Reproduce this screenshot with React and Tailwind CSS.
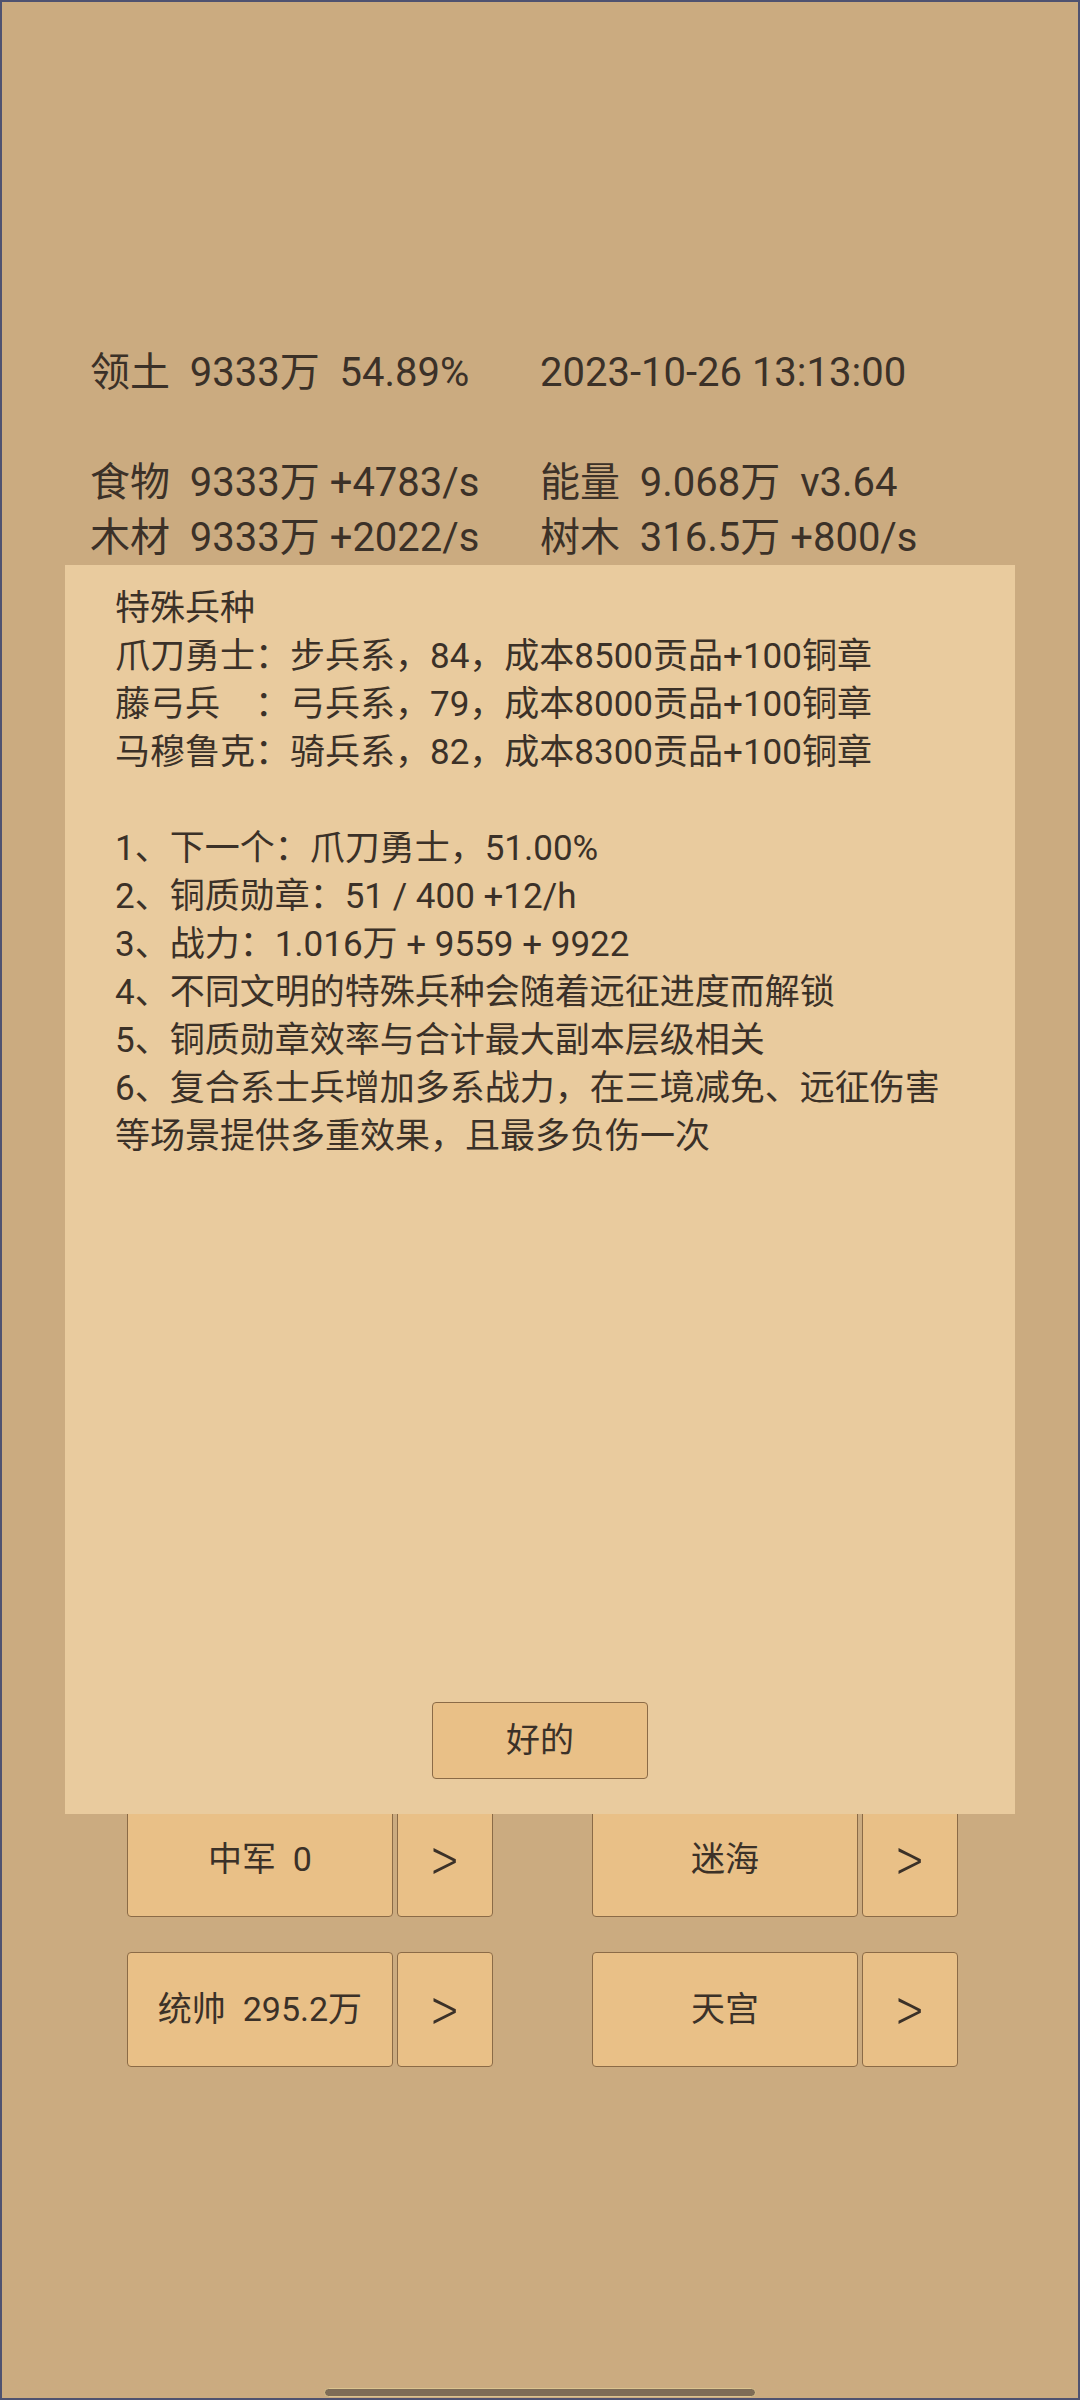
const stats = [
  ["领土  9333万  54.89%", "2023-10-26 13:13:00"],
  ["", ""],
  ["食物  9333万 +4783/s", "能量  9.068万  v3.64"],
  ["木材  9333万 +2022/s", "树木  316.5万 +800/s"],
];

const notes = [
  "特殊兵种",
  "爪刀勇士：步兵系，84，成本8500贡品+100铜章",
  "藤弓兵　：弓兵系，79，成本8000贡品+100铜章",
  "马穆鲁克：骑兵系，82，成本8300贡品+100铜章",
  "",
  "1、下一个：爪刀勇士，51.00%",
  "2、铜质勋章：51 / 400 +12/h",
  "3、战力：1.016万 + 9559 + 9922",
  "4、不同文明的特殊兵种会随着远征进度而解锁",
  "5、铜质勋章效率与合计最大副本层级相关",
  "6、复合系士兵增加多系战力，在三境减免、远征伤害",
  "等场景提供多重效果，且最多负伤一次",
];

const buttons = [
  ["中军  0", "迷海"],
  ["统帅  295.2万", "天宫"],
];

const font = { fontFamily: 'Roboto, "Noto Sans CJK SC", sans-serif' };

const NavButton = ({ label }) => (
  <div className="flex gap-[4px]">
    <button className="w-[266px] h-[115px] bg-[#e9c087] border-[1.5px] border-[#8b6b47] rounded-[4px] text-[34px] whitespace-pre text-[#3b3128]">
      {label}
    </button>
    <button className="w-[96px] h-[115px] bg-[#e9c087] border-[1.5px] border-[#8b6b47] rounded-[4px] text-[62px] font-light leading-none pb-[6px] text-[#3b3128] font-['Noto_Sans_CJK_SC',sans-serif]">
      <span className="inline-block scale-x-[0.78]">&gt;</span>
    </button>
  </div>
);

export default function App() {
  return (
    <div
      style={font}
      className="relative w-[1080px] h-[2400px] border-2 border-[#4f5270] bg-[#cbab80] text-[#3b3128] flex flex-col"
    >
      {/* resource stats */}
      <div className="pt-[343px] pl-[88px] text-[40px] leading-[55px]">
        {stats.map(([a, b], i) => (
          <div key={i} className="grid grid-cols-[450px_1fr] h-[55px] whitespace-pre">
            <span>{a}</span>
            <span>{b}</span>
          </div>
        ))}
      </div>

      {/* bottom nav buttons */}
      <div className="mt-[1237px] pl-[125px] flex flex-col gap-[35px]">
        {buttons.map(([a, b], i) => (
          <div key={i} className="flex gap-[99px]">
            <NavButton label={a} />
            <NavButton label={b} />
          </div>
        ))}
      </div>

      <div className="mt-auto mb-[1px] self-center w-[432px] h-[9px] rounded-full bg-[#7e6c56] border border-[#dcc48f]" />

      {/* dialog */}
      <div className="absolute top-[563px] left-[63px] w-[950px] h-[1249px] bg-[#e9cb9e] flex flex-col justify-between pt-[20px] pl-[50px] pr-[40px] pb-[35px]">
        <div className="text-[35px] leading-[48px]">
          {notes.map((line, i) => (
            <div key={i} className="h-[48px] whitespace-pre">
              {line}
            </div>
          ))}
        </div>
        <button className="self-center -ml-[10px] w-[216px] h-[77px] bg-[#e9c087] border-[1.5px] border-[#8b6b47] rounded-[4px] text-[34px] text-[#3b3128]">
          好的
        </button>
      </div>
    </div>
  );
}
